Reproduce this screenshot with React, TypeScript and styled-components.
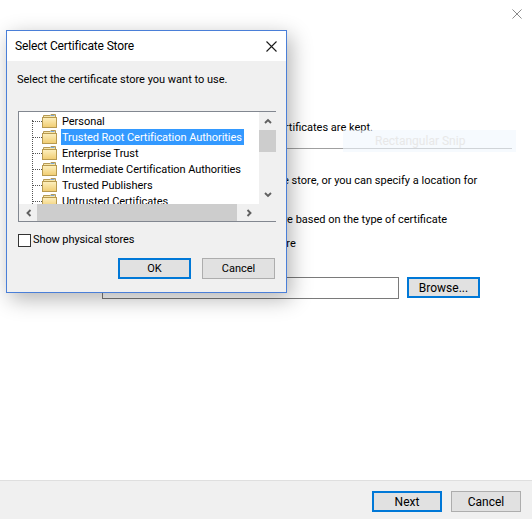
import React from "react";
import styled, { createGlobalStyle } from "styled-components";

const Global = createGlobalStyle`
  html, body { margin: 0; padding: 0; background: #fff; }
  body { font-family: "Roboto", "Noto Sans", "Liberation Sans", sans-serif; font-size: 11px; line-height: 16px; color: #000; }
  * { box-sizing: border-box; }
`;

const Wizard = styled.div`
  position: relative; width: 532px; height: 519px; display: flex; flex-direction: column; overflow: hidden; background: #fff;
`;
const TopBar = styled.div`
  display: flex; justify-content: flex-end; height: 120px; padding: 9px 10px 0 0;
`;
const Body = styled.div`flex: 1; display: flex; flex-direction: column;`;
const Line = styled.div<{ $left: number; $top?: number }>`
  padding-left: ${p => p.$left}px; margin-top: ${p => p.$top ?? 0}px; white-space: nowrap;
`;
const Divider = styled.div`height: 1px; background: #a0a0a0; margin: 12px 20px 24px 30px;`;
const PathRow = styled.div`display: flex; gap: 8px; align-items: flex-start; margin: 25px 0 0 102px; font-size: 12px;`;
const PathInput = styled.div`width: 297px; height: 22px; border: 1px solid #7a7a7a; background: #fff;`;
const Button = styled.button<{ $primary?: boolean; $w?: number }>`
  width: ${p => p.$w ?? 73}px; height: 21px; padding: 0; background: #e1e1e1; font: inherit; color: #000;
  border: ${p => (p.$primary ? "2px solid #0078d7" : "1px solid #adadad")};
`;
const Footer = styled.div`
  height: 39px; background: #f0f0f0; border-top: 1px solid #dfdfdf; display: flex; justify-content: flex-end; gap: 9px; padding: 10px 11px 0 0; font-size: 12px;
`;
const Ghost = styled.div`
  position: absolute; left: 343px; top: 130px; width: 173px; height: 22px; background: rgba(240, 247, 253, 0.6); color: #e8e8e8;
  display: flex; align-items: center; padding-left: 32px; font-size: 12px;
`;

const Dialog = styled.div`
  position: absolute; left: 6px; top: 30px; width: 281px; height: 263px; background: #f0f0f0; border: 1px solid #4a7fd8;
  box-shadow: 4px 6px 20px rgba(0, 0, 0, 0.3); display: flex; flex-direction: column;
`;
const TitleBar = styled.div`
  height: 30px; background: #fff; display: flex; align-items: center; justify-content: space-between; padding: 0 9px 0 8px; flex: none; font-size: 12px; letter-spacing: -0.15px;
`;
const DialogBody = styled.div`flex: 1; padding: 11px 10px 0 11px; display: flex; flex-direction: column;`;
const Prompt = styled.div`white-space: nowrap; margin-left: -1px;`;
const TreeBox = styled.div`
  margin-top: 23px; width: 258px; height: 111px; border: 1px solid #828790; background: #fff; display: grid; grid-template-columns: 240px 17px; grid-template-rows: 92px 17px;
`;
const Viewport = styled.div`position: relative; overflow: hidden; padding-top: 1px;`;
const TreeLine = styled.div`position: absolute; left: 13px; top: 8px; height: 96px; border-left: 1px dotted #555;`;
const Row = styled.div`display: flex; align-items: center; height: 16px; padding-left: 13px; position: relative;`;
const Dots = styled.div`width: 10px; border-top: 1px dotted #555; flex: none;`;
const Folder = styled.svg`width: 15px; height: 14px; flex: none; margin-right: 4px;`;
const Label = styled.span<{ $on?: boolean }>`
  height: 16px; line-height: 17px; padding: 0 0 0 1px; white-space: nowrap; letter-spacing: -0.05px;
  background: ${p => (p.$on ? "#3399ff" : "transparent")}; color: ${p => (p.$on ? "#fff" : "#000")};
  width: ${p => (p.$on ? "183px" : "auto")};
`;
const VBar = styled.div`background: #f0f0f0; display: flex; flex-direction: column; align-items: center; justify-content: space-between; position: relative; padding: 5px 0;`;
const HBar = styled.div`background: #f0f0f0; display: flex; align-items: center; justify-content: space-between; position: relative; padding: 0 6px; grid-column: 1 / 2;`;
const VThumb = styled.div`position: absolute; left: 0; top: 18px; width: 17px; height: 22px; background: #cdcdcd;`;
const HThumb = styled.div`position: absolute; left: 18px; top: 0; width: 200px; height: 17px; background: #cdcdcd;`;
const Corner = styled.div`background: #f0f0f0;`;
const CheckRow = styled.div`display: flex; align-items: center; gap: 2px; margin-top: 10px; letter-spacing: -0.1px;`;
const CheckBox = styled.div`width: 13px; height: 13px; border: 1px solid #333; background: #fff;`;
const Buttons = styled.div`display: flex; justify-content: flex-end; gap: 11px; margin-top: 10px; width: 257px;`;

const Chevron = ({ d }: { d: string }) => (
  <svg width="8" height="8" viewBox="0 0 8 8" style={{ display: "block", position: "relative" }}>
    <path d={d} fill="none" stroke="#606060" strokeWidth="1.9" />
  </svg>
);

const FolderIcon = () => (
  <Folder viewBox="0 0 15 14">
    <defs>
      <linearGradient id="fold" x1="0" y1="0" x2="0" y2="1">
        <stop offset="0" stopColor="#fdf0c0" />
        <stop offset="1" stopColor="#f0cc70" />
      </linearGradient>
    </defs>
    <path d="M1.5 3.5V1.5H8L9 .5H13.5V12.5H1.5Z" fill="#f7e6a8" stroke="#b69a56" />
    <path d="M8.5 1.5H12.5" stroke="#7da7d8" strokeWidth="1" />
    <rect x="0.5" y="3.5" width="14" height="10" fill="url(#fold)" stroke="#b89a50" />
  </Folder>
);

const Close = ({ color, size }: { color: string; size: number }) => (
  <svg width={size} height={size} viewBox="0 0 11 11" style={{ display: "block" }}>
    <path d="M.5.5 10.5 10.5M10.5.5.5 10.5" stroke={color} strokeWidth="1.1" fill="none" />
  </svg>
);

const stores = [
  "Personal",
  "Trusted Root Certification Authorities",
  "Enterprise Trust",
  "Intermediate Certification Authorities",
  "Trusted Publishers",
  "Untrusted Certificates",
];

export default function App() {
  return (
    <Wizard>
      <Global />
      <TopBar><Close color="#8a8a8a" size={10} /></TopBar>
      <Body>
        <Line $left={68}>Certificate stores are system areas where certificates are kept.</Line>
        <Divider />
        <Line $left={62}>Windows can automatically select a certificate store, or you can specify a location for</Line>
        <Line $left={96} $top={23}>Automatically select the certificate store based on the type of certificate</Line>
        <Line $left={92} $top={8}>Place all certificates in the following store</Line>
        <PathRow>
          <PathInput />
          <Button $primary>Browse...</Button>
        </PathRow>
      </Body>
      <Footer>
        <Button $primary $w={70}>Next</Button>
        <Button $w={70}>Cancel</Button>
      </Footer>
      <Ghost>Rectangular Snip</Ghost>
      <Dialog>
        <TitleBar>
          <span>Select Certificate Store</span>
          <Close color="#1a1a1a" size={11} />
        </TitleBar>
        <DialogBody>
          <Prompt>Select the certificate store you want to use.</Prompt>
          <TreeBox>
            <Viewport>
              <TreeLine />
              {stores.map((s, i) => (
                <Row key={s}>
                  <Dots />
                  <FolderIcon />
                  <Label $on={i === 1}>{s}</Label>
                </Row>
              ))}
            </Viewport>
            <VBar>
              <VThumb />
              <Chevron d="M1 6 4 3 7 6" />
              <Chevron d="M1 2 4 5 7 2" />
            </VBar>
            <HBar>
              <HThumb />
              <Chevron d="M5.500 1 2.500 4 5.500 7" />
              <Chevron d="M2.500 1 5.500 4 2.500 7" />
            </HBar>
            <Corner />
          </TreeBox>
          <CheckRow><CheckBox />Show physical stores</CheckRow>
          <Buttons>
            <Button $primary>OK</Button>
            <Button>Cancel</Button>
          </Buttons>
        </DialogBody>
      </Dialog>
    </Wizard>
  );
}
